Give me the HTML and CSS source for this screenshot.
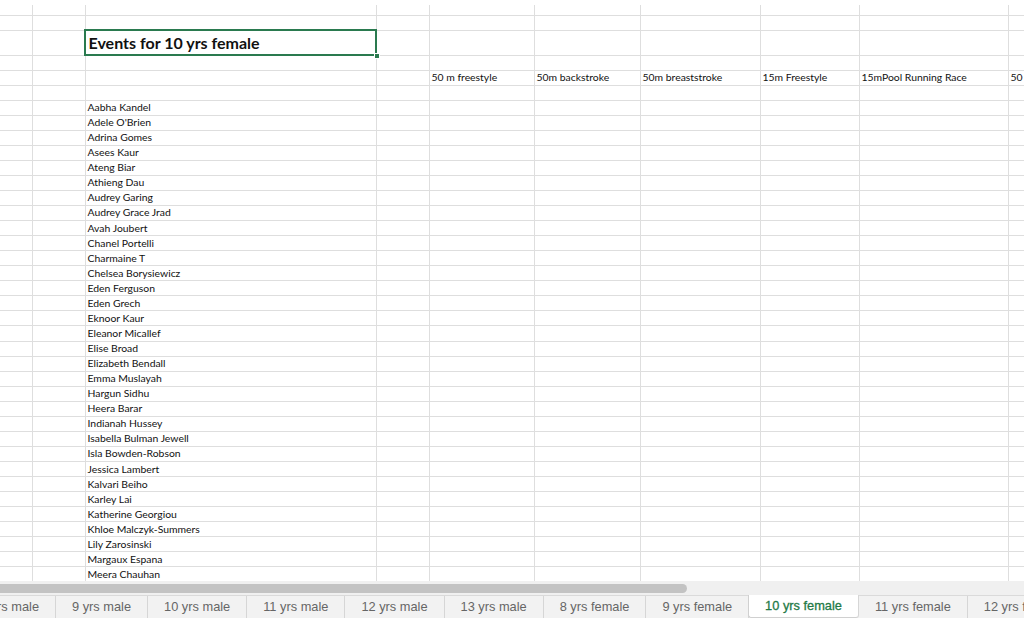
FILE: index.html
```html
<!DOCTYPE html>
<html>
<head>
<meta charset="utf-8">
<link rel="stylesheet" href="styles.css">
</head>
<body>
<div class="sheet">
<table class="grid">
<colgroup>
<col class="c-a"><col class="c-b"><col class="c-name"><col class="c-d"><col class="c-e"><col class="c-f"><col class="c-g"><col class="c-h"><col class="c-i"><col class="c-j">
</colgroup>
<tr class="r-top"><td></td><td></td><td></td><td></td><td></td><td></td><td></td><td></td><td></td><td></td></tr>
<tr><td></td><td></td><td></td><td></td><td></td><td></td><td></td><td></td><td></td><td></td></tr>
<tr class="r-title"><td></td><td></td><td class="title">Events for 10 yrs female</td><td></td><td></td><td></td><td></td><td></td><td></td><td></td></tr>
<tr><td></td><td></td><td></td><td></td><td></td><td></td><td></td><td></td><td></td><td></td></tr>
<tr><td></td><td></td><td></td><td></td><td>50 m freestyle</td><td>50m backstroke</td><td>50m breaststroke</td><td>15m Freestyle</td><td>15mPool Running Race</td><td>50</td></tr>
<tr><td></td><td></td><td></td><td></td><td></td><td></td><td></td><td></td><td></td><td></td></tr>
<tr class="r-name"><td></td><td></td><td>Aabha Kandel</td><td></td><td></td><td></td><td></td><td></td><td></td><td></td></tr>
<tr class="r-name"><td></td><td></td><td>Adele O'Brien</td><td></td><td></td><td></td><td></td><td></td><td></td><td></td></tr>
<tr class="r-name"><td></td><td></td><td>Adrina Gomes</td><td></td><td></td><td></td><td></td><td></td><td></td><td></td></tr>
<tr class="r-name"><td></td><td></td><td>Asees Kaur</td><td></td><td></td><td></td><td></td><td></td><td></td><td></td></tr>
<tr class="r-name"><td></td><td></td><td>Ateng Biar</td><td></td><td></td><td></td><td></td><td></td><td></td><td></td></tr>
<tr class="r-name"><td></td><td></td><td>Athieng Dau</td><td></td><td></td><td></td><td></td><td></td><td></td><td></td></tr>
<tr class="r-name"><td></td><td></td><td>Audrey Garing</td><td></td><td></td><td></td><td></td><td></td><td></td><td></td></tr>
<tr class="r-name"><td></td><td></td><td>Audrey Grace Jrad</td><td></td><td></td><td></td><td></td><td></td><td></td><td></td></tr>
<tr class="r-name"><td></td><td></td><td>Avah Joubert</td><td></td><td></td><td></td><td></td><td></td><td></td><td></td></tr>
<tr class="r-name"><td></td><td></td><td>Chanel Portelli</td><td></td><td></td><td></td><td></td><td></td><td></td><td></td></tr>
<tr class="r-name"><td></td><td></td><td>Charmaine T</td><td></td><td></td><td></td><td></td><td></td><td></td><td></td></tr>
<tr class="r-name"><td></td><td></td><td>Chelsea Borysiewicz</td><td></td><td></td><td></td><td></td><td></td><td></td><td></td></tr>
<tr class="r-name"><td></td><td></td><td>Eden Ferguson</td><td></td><td></td><td></td><td></td><td></td><td></td><td></td></tr>
<tr class="r-name"><td></td><td></td><td>Eden Grech</td><td></td><td></td><td></td><td></td><td></td><td></td><td></td></tr>
<tr class="r-name"><td></td><td></td><td>Eknoor Kaur</td><td></td><td></td><td></td><td></td><td></td><td></td><td></td></tr>
<tr class="r-name"><td></td><td></td><td>Eleanor Micallef</td><td></td><td></td><td></td><td></td><td></td><td></td><td></td></tr>
<tr class="r-name"><td></td><td></td><td>Elise Broad</td><td></td><td></td><td></td><td></td><td></td><td></td><td></td></tr>
<tr class="r-name"><td></td><td></td><td>Elizabeth Bendall</td><td></td><td></td><td></td><td></td><td></td><td></td><td></td></tr>
<tr class="r-name"><td></td><td></td><td>Emma Muslayah</td><td></td><td></td><td></td><td></td><td></td><td></td><td></td></tr>
<tr class="r-name"><td></td><td></td><td>Hargun Sidhu</td><td></td><td></td><td></td><td></td><td></td><td></td><td></td></tr>
<tr class="r-name"><td></td><td></td><td>Heera Barar</td><td></td><td></td><td></td><td></td><td></td><td></td><td></td></tr>
<tr class="r-name"><td></td><td></td><td>Indianah Hussey</td><td></td><td></td><td></td><td></td><td></td><td></td><td></td></tr>
<tr class="r-name"><td></td><td></td><td>Isabella Bulman Jewell</td><td></td><td></td><td></td><td></td><td></td><td></td><td></td></tr>
<tr class="r-name"><td></td><td></td><td>Isla Bowden-Robson</td><td></td><td></td><td></td><td></td><td></td><td></td><td></td></tr>
<tr class="r-name"><td></td><td></td><td>Jessica Lambert</td><td></td><td></td><td></td><td></td><td></td><td></td><td></td></tr>
<tr class="r-name"><td></td><td></td><td>Kalvari Beiho</td><td></td><td></td><td></td><td></td><td></td><td></td><td></td></tr>
<tr class="r-name"><td></td><td></td><td>Karley Lai</td><td></td><td></td><td></td><td></td><td></td><td></td><td></td></tr>
<tr class="r-name"><td></td><td></td><td>Katherine Georgiou</td><td></td><td></td><td></td><td></td><td></td><td></td><td></td></tr>
<tr class="r-name"><td></td><td></td><td>Khloe Malczyk-Summers</td><td></td><td></td><td></td><td></td><td></td><td></td><td></td></tr>
<tr class="r-name"><td></td><td></td><td>Lily Zarosinski</td><td></td><td></td><td></td><td></td><td></td><td></td><td></td></tr>
<tr class="r-name"><td></td><td></td><td>Margaux Espana</td><td></td><td></td><td></td><td></td><td></td><td></td><td></td></tr>
<tr class="r-name"><td></td><td></td><td>Meera Chauhan</td><td></td><td></td><td></td><td></td><td></td><td></td><td></td></tr>
</table>
</div>
<div class="hscroll"><div class="thumb"></div></div>
<div class="tabbar">
  <div class="tabs">
    <div class="tab">8 yrs male</div>
    <div class="tab">9 yrs male</div>
    <div class="tab">10 yrs male</div>
    <div class="tab">11 yrs male</div>
    <div class="tab">12 yrs male</div>
    <div class="tab">13 yrs male</div>
    <div class="tab">8 yrs female</div>
    <div class="tab">9 yrs female</div>
    <div class="tab active">10 yrs female</div>
    <div class="tab">11 yrs female</div>
    <div class="tab">12 yrs female</div>
    <div class="tab">13 yrs female</div>
  </div>
</div>
</body>
</html>
```
FILE: styles.css
```css
html, body {
  margin: 0;
  padding: 0;
  background: #ffffff;
  width: 1024px;
  height: 626px;
  overflow: hidden;
}

.sheet {
  height: 581px;
  padding-top: 5px;
  box-sizing: border-box;
  overflow: hidden;
}

.grid {
  border-collapse: collapse;
  table-layout: fixed;
  width: 1024px;
  font-family: "Lato", "Liberation Sans", sans-serif;
  font-size: 10.4px;
  color: #111;
}

.c-a { width: 32px; }
.c-b { width: 53px; }
.c-name { width: 291px; }
.c-d { width: 53px; }
.c-e { width: 105px; }
.c-f { width: 106px; }
.c-g { width: 120px; }
.c-h { width: 99px; }
.c-i { width: 149px; }
.c-j { width: 16px; }

.grid tr { height: 15px; }
.grid tr.r-name { height: 15.07px; }
.grid tr.r-top { height: 10px; }
.grid tr.r-title { height: 25px; }

.grid td {
  border: 1px solid #dedede;
  padding: 0 0 0 2px;
  line-height: 13px;
  white-space: nowrap;
  overflow: hidden;
  vertical-align: middle;
}

.grid tr:first-child td { border-top: none; }
.grid td:first-child { border-left: none; }

.grid td.title {
  position: relative;
  overflow: visible;
  font-size: 16px;
  font-weight: bold;
  padding-left: 3px;
  outline: 2px solid #2a7a4f;
  outline-offset: -1px;
}

.grid td.title::after {
  content: "";
  position: absolute;
  right: -4px;
  bottom: -4px;
  width: 6px;
  height: 6px;
  background: #2a7a4f;
  border: 1px solid #ffffff;
  box-sizing: border-box;
}

.hscroll {
  height: 14px;
  background: #f0f0f0;
  padding-top: 3px;
  box-sizing: border-box;
  overflow: hidden;
}

.thumb {
  width: 697px;
  height: 9px;
  margin-left: -10px;
  border-radius: 5px;
  background: #c3c3c3;
}

.tabbar {
  height: 31px;
  overflow: hidden;
  background: #ffffff;
}

.tabs {
  display: flex;
  height: 22px;
  margin-left: -36px;
  background: #f2f2f2;
  border-top: 1px solid #dadada;
  font-family: "Liberation Sans", Arial, sans-serif;
  font-size: 12.8px;
  color: #666666;
}

.tab {
  flex: none;
  padding: 0 16px;
  line-height: 21px;
  border-right: 1px solid #d6d6d6;
  white-space: nowrap;
}

.tab.active {
  background: #ffffff;
  color: #1f7a47;
  -webkit-text-stroke: 0.3px #1f7a47;
  border-left: 1px solid #d0d0d0;
  border-bottom: 1px solid #d0d0d0;
  border-radius: 0 0 3px 3px;
  margin-left: -1px;
  margin-top: -1px;
  line-height: 22px;
}
```
